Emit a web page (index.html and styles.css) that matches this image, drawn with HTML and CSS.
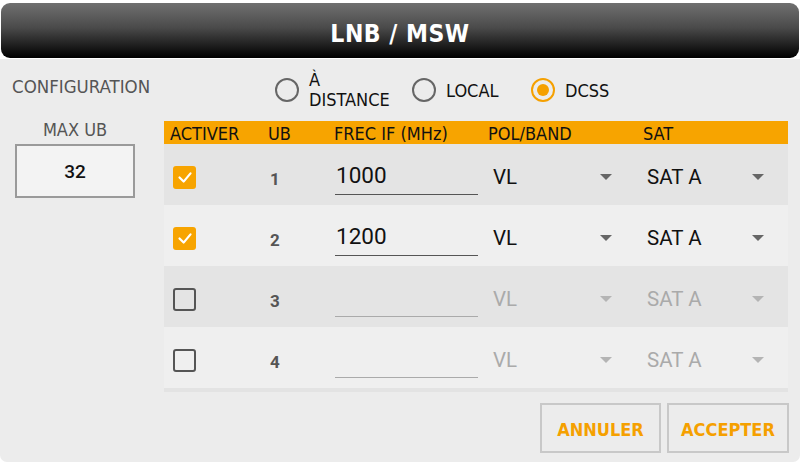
FILE: index.html
```html
<!DOCTYPE html>
<html>
<head>
<meta charset="utf-8">
<link rel="stylesheet" href="styles.css">
</head>
<body>
<div class="dialog">
  <div class="titlebar">LNB / MSW</div>
  <div class="panel">
    <div class="config-row">
      <div class="config-label">CONFIGURATION</div>
      <div class="radios">
        <div class="radio radio-distance"><span class="ring"></span><span class="rlabel">À<br>DISTANCE</span></div>
        <div class="radio radio-local"><span class="ring"></span><span class="rlabel">LOCAL</span></div>
        <div class="radio radio-dcss"><span class="ring on"><span class="dot"></span></span><span class="rlabel">DCSS</span></div>
      </div>
    </div>
    <div class="main-row">
      <div class="side">
        <div class="side-label">MAX UB</div>
        <div class="maxbox">32</div>
      </div>
      <div class="table">
        <div class="thead">
          <div class="th c1">ACTIVER</div>
          <div class="th c2">UB</div>
          <div class="th c3">FREC IF (MHz)</div>
          <div class="th c4">POL/BAND</div>
          <div class="th c5">SAT</div>
        </div>
        <div class="trow dark">
          <div class="c1"><span class="check on"><svg viewBox="0 0 24 24" width="24" height="24"><polyline points="6,12.5 10.5,17 18,8" fill="none" stroke="#fff" stroke-width="2.4" stroke-linecap="round" stroke-linejoin="round"/></svg></span></div>
          <div class="c2 num">1</div>
          <div class="c3"><div class="field">1000</div></div>
          <div class="c4"><div class="select"><span>VL</span><span class="arrow"></span></div></div>
          <div class="c5"><div class="select"><span>SAT A</span><span class="arrow"></span></div></div>
        </div>
        <div class="trow light">
          <div class="c1"><span class="check on"><svg viewBox="0 0 24 24" width="24" height="24"><polyline points="6,12.5 10.5,17 18,8" fill="none" stroke="#fff" stroke-width="2.4" stroke-linecap="round" stroke-linejoin="round"/></svg></span></div>
          <div class="c2 num">2</div>
          <div class="c3"><div class="field">1200</div></div>
          <div class="c4"><div class="select"><span>VL</span><span class="arrow"></span></div></div>
          <div class="c5"><div class="select"><span>SAT A</span><span class="arrow"></span></div></div>
        </div>
        <div class="trow dark disabled">
          <div class="c1"><span class="check"></span></div>
          <div class="c2 num">3</div>
          <div class="c3"><div class="field"></div></div>
          <div class="c4"><div class="select"><span>VL</span><span class="arrow"></span></div></div>
          <div class="c5"><div class="select"><span>SAT A</span><span class="arrow"></span></div></div>
        </div>
        <div class="trow light disabled">
          <div class="c1"><span class="check"></span></div>
          <div class="c2 num">4</div>
          <div class="c3"><div class="field"></div></div>
          <div class="c4"><div class="select"><span>VL</span><span class="arrow"></span></div></div>
          <div class="c5"><div class="select"><span>SAT A</span><span class="arrow"></span></div></div>
        </div>
        <div class="tfoot"></div>
      </div>
    </div>
    <div class="buttons">
      <div class="btn">ANNULER</div>
      <div class="btn">ACCEPTER</div>
    </div>
  </div>
</div>
</body>
</html>
```

FILE: styles.css
```css
html, body {
  margin: 0;
  padding: 0;
  background: #ffffff;
}
body {
  font-family: "DejaVu Sans Condensed", "DejaVu Sans", sans-serif;
  width: 800px;
  height: 462px;
  overflow: hidden;
}
.dialog {
  width: 800px;
  height: 462px;
  display: flex;
  flex-direction: column;
  padding-top: 3px;
  box-sizing: border-box;
}
.titlebar {
  height: 55px;
  margin: 0 1px;
  border-radius: 9px;
  background: linear-gradient(to bottom, #707070 0%, #4a4a4a 45%, #1a1a1a 80%, #000 100%);
  color: #fff;
  font-weight: bold;
  font-size: 24.5px;
  letter-spacing: 0.5px;
  display: flex;
  align-items: center;
  justify-content: center;
  padding-top: 5px;
  box-sizing: border-box;
}
.panel {
  flex: 1;
  background: #ececec;
  margin-top: 1px;
  border-radius: 0 0 7px 7px;
  display: flex;
  flex-direction: column;
}
.config-row {
  height: 62px;
  display: flex;
  align-items: center;
}
.config-label {
  width: 275px;
  padding-left: 12px;
  box-sizing: border-box;
  font-size: 18.5px;
  color: #555;
  padding-bottom: 8px;
}
.radios {
  display: flex;
  align-items: center;
}
.radio {
  display: flex;
  align-items: center;
  font-size: 18px;
  color: #111;
}
.radio-distance { width: 137px; }
.radio-local { width: 119px; }
.ring {
  width: 20px;
  height: 20px;
  border: 2px solid #666;
  border-radius: 50%;
  margin-right: 10px;
  display: flex;
  align-items: center;
  justify-content: center;
}
.ring.on { border-color: #f5a000; }
.dot {
  width: 12px;
  height: 12px;
  border-radius: 50%;
  background: #f5a000;
}
.rlabel { line-height: 19px; padding-top: 1px; }
.radio-distance .rlabel { padding-top: 0; margin-top: 0; line-height: 20px; }

.main-row {
  display: flex;
  height: 272px;
}
.side {
  width: 164px;
  display: flex;
  flex-direction: column;
  align-items: flex-start;
}
.side-label {
  width: 150px;
  text-align: center;
  font-size: 18px;
  color: #555;
  height: 23px;
  line-height: 18px;
}
.maxbox {
  margin-left: 15px;
  width: 120px;
  height: 54px;
  box-sizing: border-box;
  border: 2px solid #9a9a9a;
  background: #f3f3f3;
  display: flex;
  align-items: center;
  justify-content: center;
  font-family: Roboto, sans-serif;
  font-weight: 500;
  font-size: 19px;
  color: #111;
}
.table {
  width: 624px;
  display: flex;
  flex-direction: column;
}
.thead, .trow {
  display: grid;
  grid-template-columns: 96px 70px 154px 155px 149px;
}
.thead {
  height: 23px;
  background: #f7a400;
  align-items: center;
}
.th {
  font-size: 18px;
  color: #111;
  padding-left: 6px;
  padding-top: 1px;
  white-space: nowrap;
}
.th.c2 { padding-left: 8px; }
.th.c3 { padding-left: 4px; }
.th.c4 { padding-left: 4px; }
.th.c5 { padding-left: 4px; }
.trow {
  height: 61px;
  align-items: center;
  padding-top: 5px;
  box-sizing: border-box;
}
.trow.dark { background: #e4e4e4; }
.trow.light { background: #efefef; }
.tfoot {
  height: 4px;
  background: #e3e3e3;
}
.c1 { display: flex; }
.check {
  margin-left: 9px;
  width: 23px;
  height: 23px;
  box-sizing: border-box;
  border: 2px solid #555;
  border-radius: 3px;
  display: flex;
  align-items: center;
  justify-content: center;
}
.check.on {
  background: #f7a400;
  border: none;
}
.check svg { width: 22px; height: 22px; }
.num {
  padding-left: 10px;
  font-family: Roboto, sans-serif;
  font-weight: bold;
  font-size: 17px;
  color: #555;
  padding-top: 3px;
}
.field {
  margin-left: 5px;
  width: 143px;
  height: 34px;
  box-sizing: border-box;
  border-bottom: 1.5px solid #555;
  font-family: Roboto, sans-serif;
  font-size: 22.5px;
  color: #111;
  line-height: 28px;
  padding-left: 1px;
  margin-top: 2px;
}
.disabled .field { border-bottom-color: #aaa; }
.select {
  display: flex;
  align-items: center;
  justify-content: space-between;
  padding-left: 9px;
  padding-right: 27px;
  font-family: Roboto, sans-serif;
  font-size: 20.5px;
  color: #111;
}
.c5 .select { padding-left: 8px; padding-right: 24px; }
.arrow {
  width: 0;
  height: 0;
  border-left: 6.5px solid transparent;
  border-right: 6.5px solid transparent;
  border-top: 6.5px solid #666;
}
.disabled .select { color: #aaa; }
.disabled .arrow { border-top-color: #b4b4b4; }

.buttons {
  display: flex;
  justify-content: flex-end;
  gap: 6px;
  padding-right: 11px;
  margin-top: 10px;
}
.btn {
  width: 121px;
  height: 50px;
  box-sizing: border-box;
  border: 2px solid #c8c8c8;
  background: #ececec;
  display: flex;
  align-items: center;
  justify-content: center;
  color: #f5a000;
  font-weight: bold;
  font-size: 18px;
  padding-top: 2px;
}
.btn + .btn { width: 122px; }
```
